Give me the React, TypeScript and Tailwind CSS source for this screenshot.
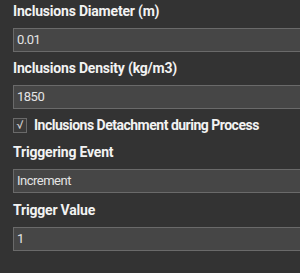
import React from "react";

const Label: React.FC<{ text: string }> = ({ text }) => (
	<div className="h-[23px] pl-[13px] pt-[3px] text-[14px] font-bold leading-[17px] tracking-[-0.2px] text-[#f2f2f2]">
		{text}
	</div>
);

const Field: React.FC<{ value: string }> = ({ value }) => (
	<div className="ml-[13px] mt-[5px] h-[24px] border border-[#6a6a6a] border-r-0 bg-[#464646] pl-[3px] text-[13px] leading-[22px] tracking-[-0.5px] text-[#e4e4e4]">
		{value}
	</div>
);

export default function App() {
	return (
		<div
			className="h-[273px] w-[300px] overflow-hidden bg-[#333333]"
			style={{ fontFamily: "Roboto, 'Liberation Sans', sans-serif" }}
		>
			<Label text="Inclusions Diameter (m)" />
			<Field value="0.01" />
			<div className="h-[5px]" />
			<Label text="Inclusions Density (kg/m3)" />
			<Field value="1850" />
			<div className="mt-[8px] flex h-[16px] items-center gap-[7px] pl-[13px]">
				<div className="flex h-[15px] w-[14px] items-center justify-center border border-[#6a6a6a] bg-[#3a3a3a] text-[12px] leading-none text-[#cfcfcf]">
					√
				</div>
				<span className="text-[14px] font-bold leading-[17px] tracking-[-0.5px] text-[#f2f2f2]">
					Inclusions Detachment during Process
				</span>
			</div>
			<div className="h-[8px]" />
			<Label text="Triggering Event" />
			<Field value="Increment" />
			<div className="h-[6px]" />
			<Label text="Trigger Value" />
			<Field value="1" />
		</div>
	);
}
